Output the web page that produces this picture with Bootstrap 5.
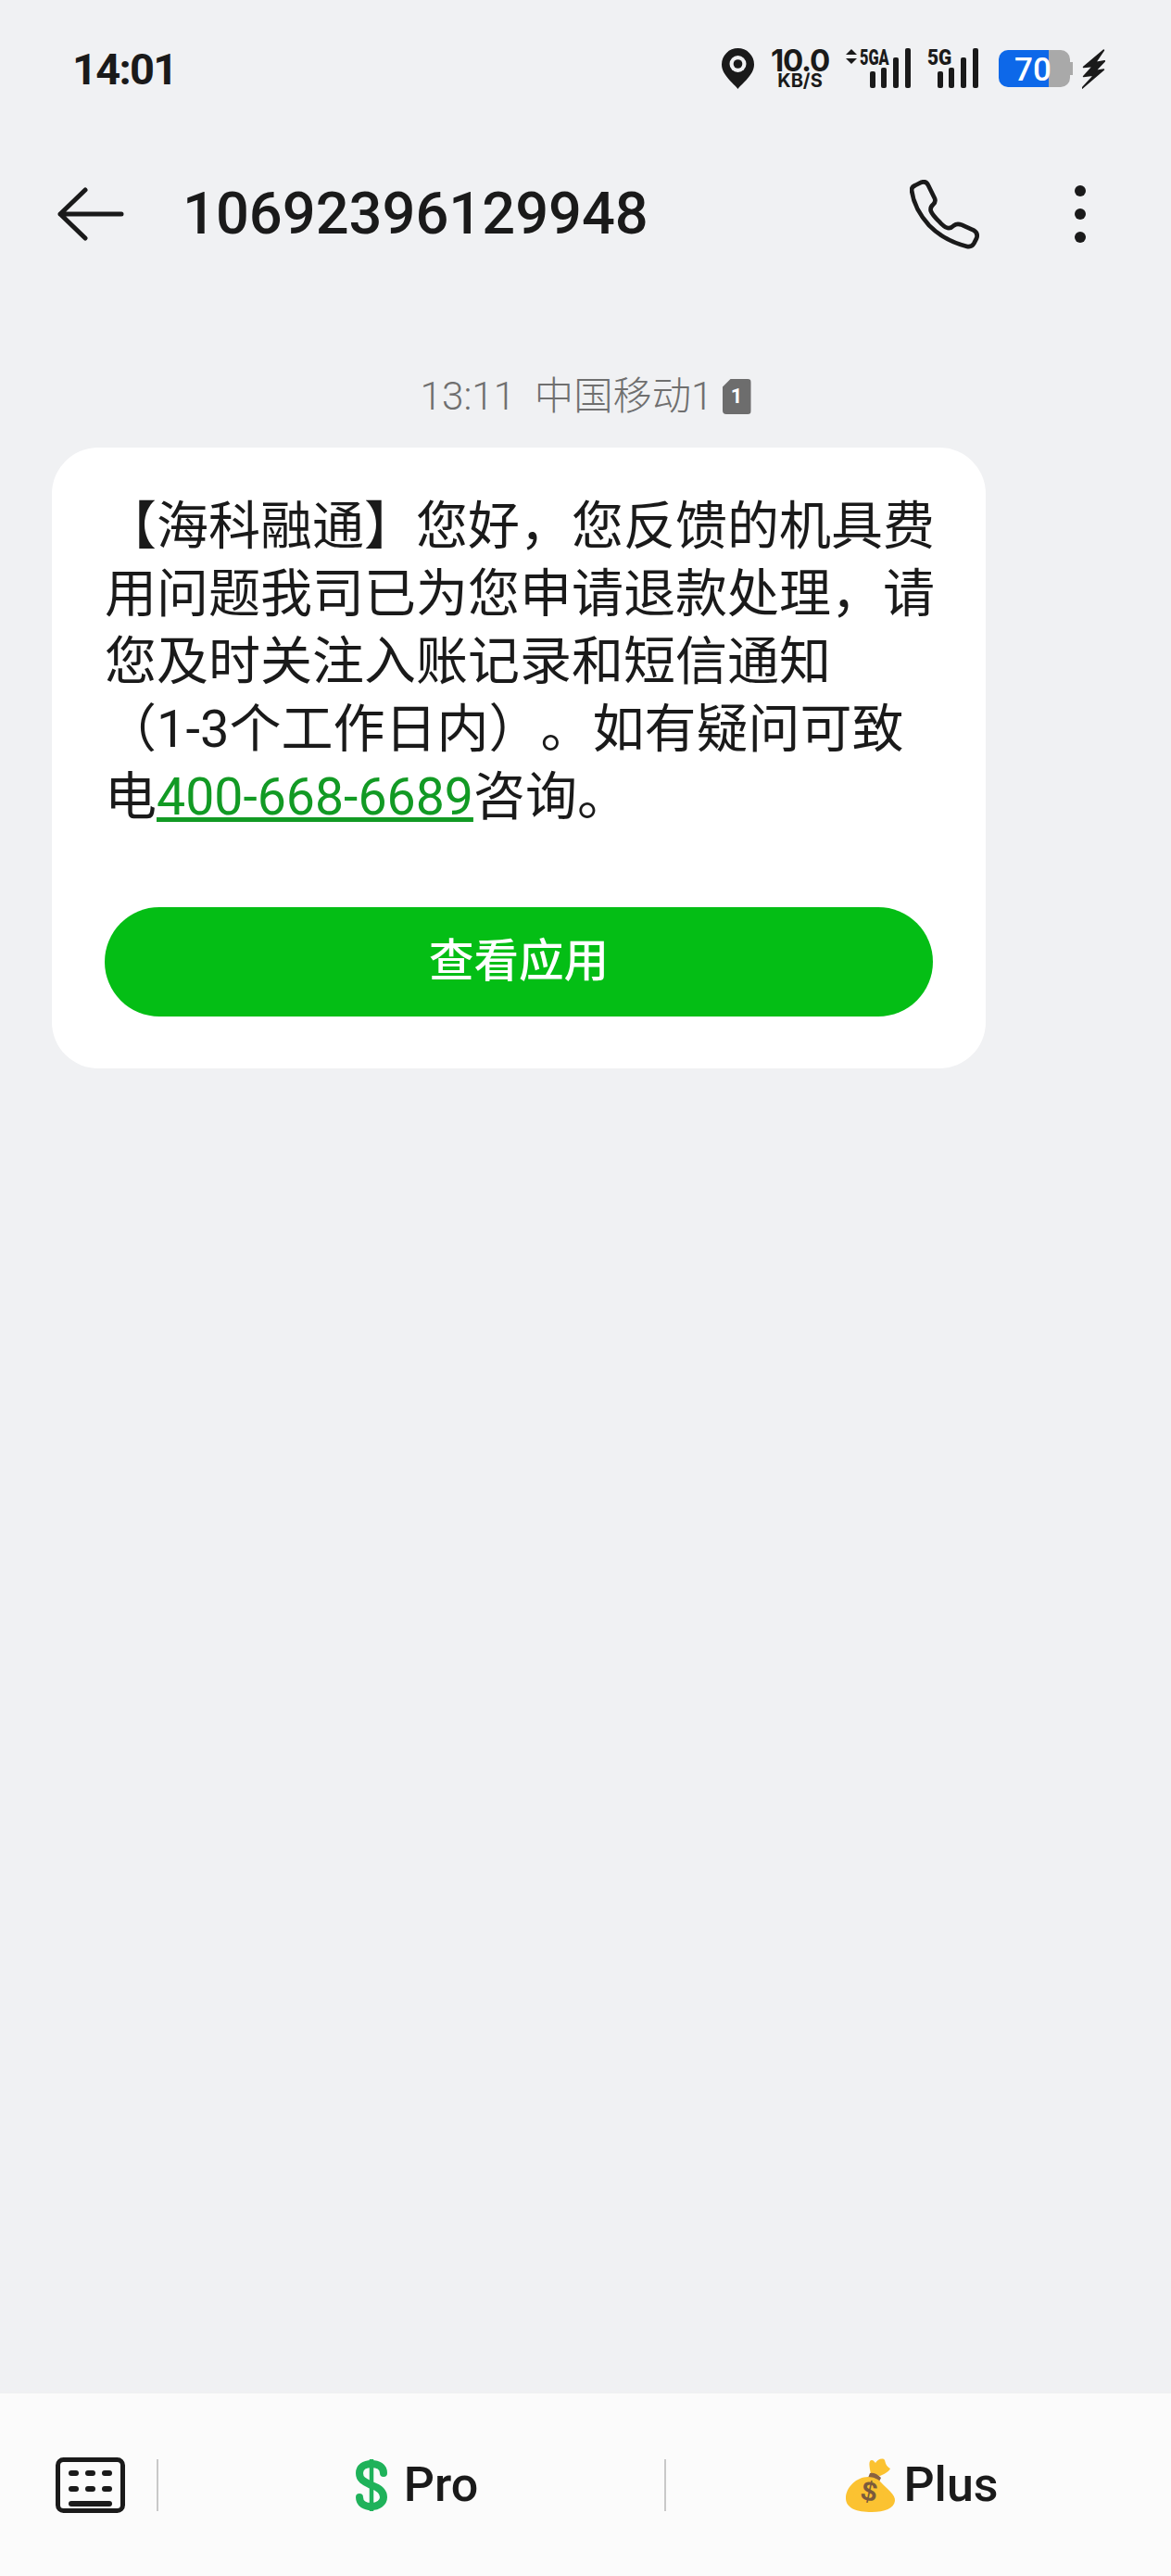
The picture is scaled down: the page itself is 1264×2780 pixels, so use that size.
<!DOCTYPE html>
<html lang="zh-CN">

<head>
  <meta charset="UTF-8">
  <title>10692396129948</title>
  <meta name="viewport" content="width=device-width, initial-scale=1">
  <link href="https://cdn.jsdelivr.net/npm/bootstrap@5.3.0/dist/css/bootstrap.min.css" rel="stylesheet">
  <script src="https://cdn.jsdelivr.net/npm/bootstrap@5.3.0/dist/js/bootstrap.bundle.min.js"></script>
  <style>
    body {
      font-family: Roboto, "Noto Sans CJK SC", sans-serif;
      background-color: #f0f1f3;
      color: #1a1a1a;
    }

    .phone-screen {
      height: 2780px;
    }

    .status-row {
      height: 148px;
      padding: 0 71px 0 78px;
    }

    .status-time {
      font-size: 47px;
      font-weight: 700;
      letter-spacing: -1.7px;
      line-height: 1;
    }

    .status-icons {
      gap: 18px;
    }

    .speed-box {
      width: 63px;
      height: 44px;
      text-align: center;
      font-family: Inter, Roboto, sans-serif;
      font-weight: 700;
    }

    .speed-num {
      font-size: 33px;
      line-height: 27px;
      letter-spacing: -1.2px;
      white-space: nowrap;
    }

    .speed-unit {
      font-size: 20px;
      line-height: 17px;
      white-space: nowrap;
    }

    .net-icon {
      height: 44px;
    }

    .net-4g {
      width: 70px;
    }

    .net-5g {
      width: 55px;
    }

    .net-label {
      position: absolute;
      top: 0;
      font-weight: 900;
      font-size: 24px;
      line-height: 20px;
      white-space: nowrap;
      transform: scaleX(.68);
      transform-origin: left top;
    }

    .net-label-a {
      left: 15px;
    }

    .net-label-g {
      left: 0;
      transform: scaleX(.87);
    }

    .batt-group {
      gap: 10px;
    }

    .batt-label {
      font-family: Roboto, sans-serif;
      font-weight: 500;
      font-size: 35px;
      fill: #fff;
    }

    .bag-dollar {
      font-family: "Liberation Sans", sans-serif;
      font-weight: 700;
      font-size: 30px;
      fill: #7a5a3c;
    }

    .title-row {
      height: 166px;
      padding: 0 92px 0 62px;
    }

    .title-num {
      font-size: 63.2px;
      font-weight: 500;
      line-height: 1;
      margin-left: 63px;
    }

    .title-actions {
      gap: 103px;
    }

    .msg-area {
      padding: 0 56px;
    }

    .msg-time {
      height: 60px;
      margin-top: 84px;
      margin-bottom: 25px;
      gap: 10px;
      font-size: 42.3px;
      font-weight: 300;
      color: #6f6f6f;
    }

    .sim-chip {
      width: 31px;
      height: 38px;
      background-color: #6d6d6d;
      color: #fff;
      font-size: 22px;
      font-weight: 700;
      line-height: 38px;
      text-align: center;
      border-radius: 4px;
      clip-path: polygon(9px 0, 100% 0, 100% 100%, 0 100%, 0 9px);
    }

    .msg-bubble {
      width: 1008px;
      padding: 49px 57px 56px;
      border: 0;
      border-radius: 50px;
      background-color: #fff;
    }

    .msg-body {
      margin: 0 -8px 82px 0;
      font-size: 56px;
      line-height: 73px;
      color: #1a1a1a;
      text-spacing-trim: space-all;
    }

    .msg-body a {
      font-size: 55.4px;
      color: #129a24;
    }

    .open-btn {
      height: 118px;
      font-size: 48.5px;
      font-weight: 500;
      line-height: 118px;
      padding: 0;
      border: 0;
      color: #fff;
      background-color: #04be15;
    }

    .bottom-bar {
      height: 197px;
      padding-top: 69px;
      padding-bottom: 68px;
      background-color: #fbfbfb;
    }

    .kb-cell {
      width: 169px;
      padding-left: 60px;
    }

    .bar-cell {
      height: 56px;
      border-left: 2px solid #c9c9c9;
      gap: 18px;
      font-size: 52px;
      font-weight: 500;
      line-height: 1;
      color: #1a1a1a;
    }

    .pro-cell {
      width: 548px;
      padding-left: 12px;
    }

    .plus-cell {
      width: 547px;
      padding-left: 8px;
      gap: 8px;
    }
  </style>
</head>

<body>
  <div class="phone-screen d-flex flex-column">
    <!-- status bar -->
    <div class="status-row d-flex align-items-center justify-content-between">
      <span class="status-time">14:01</span>
      <div class="status-icons d-flex align-items-center">
        <svg width="35" height="44" viewBox="0 0 35 44">
          <path d="M17.5 44 C13 38 0 29 0 17.5 A17.5 17.5 0 0 1 35 17.5 C35 29 22 38 17.5 44 Z" fill="#1a1a1a" />
          <circle cx="17.5" cy="17" r="9" fill="#f0f1f3" />
          <circle cx="17.5" cy="17" r="4.8" fill="#1a1a1a" />
        </svg>
        <div class="speed-box">
          <div class="speed-num">10.0</div>
          <div class="speed-unit">KB/S</div>
        </div>
        <div class="net-icon net-4g position-relative">
          <span class="net-label net-label-a">5GA</span>
          <svg class="d-block" width="70" height="44" viewBox="0 0 70 44" fill="#1a1a1a">
            <polygon points="6,1 12,7 0,7" />
            <polygon points="6,17 12,11 0,11" />
            <rect x="26" y="25" width="6" height="18" rx="2" />
            <rect x="38" y="21" width="6" height="22" rx="2" />
            <rect x="51" y="10" width="6" height="33" rx="2" />
            <rect x="64" y="0" width="6" height="43" rx="2" />
          </svg>
        </div>
        <div class="net-icon net-5g position-relative">
          <span class="net-label net-label-g">5G</span>
          <svg class="d-block" width="55" height="44" viewBox="0 0 55 44" fill="#1a1a1a">
            <rect x="11" y="25" width="6" height="18" rx="2" />
            <rect x="23" y="21" width="6" height="22" rx="2" />
            <rect x="36" y="10" width="6" height="33" rx="2" />
            <rect x="49" y="0" width="6" height="43" rx="2" />
          </svg>
        </div>
        <div class="batt-group d-flex align-items-center ms-1">
          <svg width="80" height="40" viewBox="0 0 80 40">
            <path d="M54 0 H10 A10 10 0 0 0 0 10 V30 A10 10 0 0 0 10 40 H54 Z" fill="#0d68e9" />
            <path d="M54 0 H67 A10 10 0 0 1 77 10 V13 H80 V27 H77 V30 A10 10 0 0 1 67 40 H54 Z" fill="#a9a9a9" />
            <text class="batt-label" x="17" y="33">70</text>
          </svg>
          <svg width="25" height="43" viewBox="505 42 75 128">
            <polygon fill="#1a1a1a" stroke="#1a1a1a" stroke-width="5" stroke-linejoin="round" points="575,45 510,100 540,97 510,130 545,125 505,168 575,108 548,112 578,80 548,85" />
          </svg>
        </div>
      </div>
    </div>

    <!-- title row -->
    <div class="title-row d-flex align-items-center">
      <svg width="72" height="58" viewBox="0 0 72 58" fill="none" stroke="#1a1a1a" stroke-width="5" stroke-linecap="round" stroke-linejoin="round">
        <path d="M30 3 L3 29 L30 55 M3 29 H69" />
      </svg>
      <span class="title-num">10692396129948</span>
      <div class="title-actions ms-auto d-flex align-items-center">
        <svg width="75" height="75" viewBox="122 72 225 225" fill="none" stroke="#1a1a1a" stroke-width="14" stroke-linejoin="round">
          <path d="M140 90 L160 80 Q175 75 182 90 L203 133 Q207 143 198 152 Q188 160 190 172 Q195 185 215 205 Q232 225 245 228 Q255 230 265 220 Q275 212 290 218 L328 235 Q345 245 338 262 L330 278 Q322 292 305 287 Q235 270 185 220 Q135 165 128 105 Q128 95 140 90 Z" />
        </svg>
        <svg width="12" height="62" viewBox="0 0 12 62" fill="#1a1a1a">
          <circle cx="6" cy="6" r="6" />
          <circle cx="6" cy="31" r="6" />
          <circle cx="6" cy="56" r="6" />
        </svg>
      </div>
    </div>

    <!-- message -->
    <div class="msg-area flex-grow-1">
      <div class="msg-time d-flex align-items-center justify-content-center">
        <span>13:11&nbsp;&nbsp;中国移动1</span>
        <span class="sim-chip">1</span>
      </div>
      <div class="card msg-bubble">
        <p class="msg-body">【海科融通】您好，您反馈的机具费用问题我司已为您申请退款处理，请您及时关注入账记录和短信通知<br>（1-3个工作日内）。如有疑问可致电<a href="#">400-668-6689</a>咨询。</p>
        <button class="btn rounded-pill open-btn w-100" type="button">查看应用</button>
      </div>
    </div>

    <!-- bottom bar -->
    <div class="bottom-bar d-flex align-items-center">
      <div class="kb-cell">
        <svg class="d-block" width="75" height="60" viewBox="0 0 75 60" fill="#1a1a1a">
          <rect x="2.5" y="2.5" width="70" height="55" rx="6" fill="none" stroke="#1a1a1a" stroke-width="5" />
          <rect x="14" y="14" width="11" height="6" rx="3" />
          <rect x="32" y="14" width="11" height="6" rx="3" />
          <rect x="50" y="14" width="11" height="6" rx="3" />
          <rect x="14" y="31" width="11" height="6" rx="3" />
          <rect x="32" y="31" width="11" height="6" rx="3" />
          <rect x="50" y="31" width="11" height="6" rx="3" />
          <rect x="14" y="47" width="47" height="6" rx="3" />
        </svg>
      </div>
      <div class="bar-cell pro-cell d-flex align-items-center justify-content-center">
        <svg width="34" height="58" viewBox="0 0 34 58" fill="none" stroke="#1fb25a">
          <path d="M17 1 V57" stroke-width="4.5" />
          <path d="M30 16 C30 9 24 6 17 6 C9 6 4 10 4 16 C4 24 11 26 17 29 C23 31 30 34 30 42 C30 48 24 52 17 52 C10 52 4 49 4 42" stroke-width="8" stroke-linecap="round" />
        </svg>
        <span>Pro</span>
      </div>
      <div class="bar-cell plus-cell d-flex align-items-center justify-content-center">
        <svg width="54" height="58" viewBox="0 0 54 58">
          <path d="M26 12 C25 6 25 2 28 2 C30 2 31 4 32 5 C34 1 40 -1 42 2 C43 5 43 8 48 11 C46 15 41 17 37 19 L27 17 Z" fill="#fbc231" />
          <path d="M26 16 Q32 15 38 21 L36 25 L24 21 Z" fill="#8a6240" />
          <path d="M24 20 C30 20 36 23 38 26 C44 33 54 39 53 46 C52 54 42 58 28 58 C12 58 0 54 0 43 C0 31 12 20 24 20 Z" fill="#fbc231" />
          <text class="bag-dollar" x="17" y="46" transform="rotate(12 25 36)">$</text>
        </svg>
        <span>Plus</span>
      </div>
    </div>
  </div>
</body>

</html>
